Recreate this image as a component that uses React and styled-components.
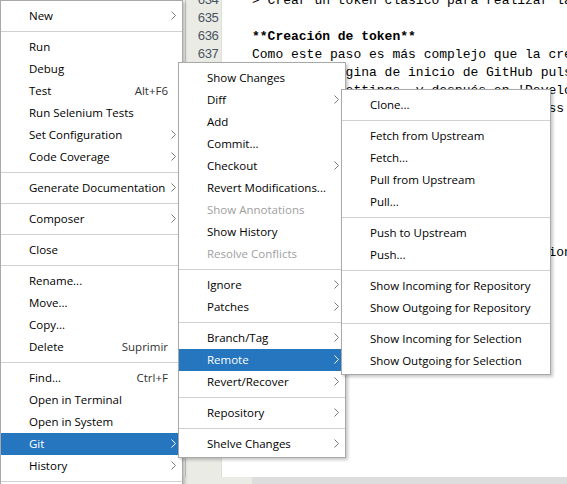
import React from "react";
import styled, { createGlobalStyle } from "styled-components";

const GlobalStyle = createGlobalStyle`
  *, *::before, *::after { box-sizing: border-box; }
  html, body { margin: 0; padding: 0; }
  body {
    background: #ffffff;
    font-family: "Segoe UI", "Open Sans", "Noto Sans", sans-serif;
  }
`;

const Screen = styled.div`
  position: relative;
  width: 567px;
  height: 484px;
  overflow: hidden;
  display: flex;
  flex-direction: column;
  background: #ffffff;
`;

const Workspace = styled.div`
  flex: 1;
  display: flex;
  min-height: 0;
  overflow: hidden;
`;

const ProjectPanel = styled.div`
  width: 186px;
  flex-shrink: 0;
  background: #f2f2f2;
  border-right: 1px solid #c8c8c8;
`;

const Gutter = styled.div`
  width: 36px;
  flex-shrink: 0;
  background: #ebebe6;
  border-right: 1px solid #dededa;
  padding-right: 3px;
  margin-top: -8px;
  font-family: "Liberation Mono", monospace;
  font-size: 13px;
  letter-spacing: -1px;
  line-height: 18px;
  color: #46525e;
  text-align: right;
`;

const Editor = styled.div`
  flex: 1;
  padding-left: 30px;
  margin-top: -8px;
  font-family: "Liberation Mono", "Courier New", monospace;
  font-size: 13px;
  line-height: 18px;
  color: #000000;
  white-space: pre;
  overflow: hidden;
`;

const CodeLine = styled.div`
  height: 18px;
  font-weight: ${(p) => (p.$bold ? 700 : 400)};
`;

const LineNo = styled.div`
  height: 18px;
`;

const BottomBar = styled.div`
  height: 7px;
  display: flex;
`;

const BarLeft = styled.div`
  width: 252px;
  background: #ebebe6;
`;

const BarTrack = styled.div`
  flex: 1;
  background: #dddddd;
`;

const Menu = styled.div`
  position: absolute;
  top: ${(p) => p.$top}px;
  left: ${(p) => p.$left}px;
  width: ${(p) => p.$width}px;
  background: #ffffff;
  border: 1px solid #a9a9a9;
  padding: 4px 0 2px;
  box-shadow: 2px 2px 3px rgba(0, 0, 0, 0.22);
`;

const Item = styled.div`
  height: 22px;
  display: flex;
  align-items: center;
  padding: 0 6px 1px 28px;
  font-size: 11.5px;
  white-space: nowrap;
  color: ${(p) => (p.$active ? "#ffffff" : p.$disabled ? "#a0a0a0" : "#000000")};
  background: ${(p) => (p.$active ? "#2675bf" : "transparent")};
`;

const Label = styled.span`
  flex: 1;
`;

const Shortcut = styled.span`
  margin-right: 8px;
  color: #333333;
`;

const Separator = styled.div`
  height: 9px;
  display: flex;
  align-items: center;
  &::after {
    content: "";
    flex: 1;
    height: 1px;
    background: #d0d0d0;
  }
`;

function Arrow({ active }) {
  return (
    <svg width="5" height="9" viewBox="0 0 5 9">
      <path
        d="M0.5 0.5 L4.5 4.5 L0.5 8.5"
        fill="none"
        stroke={active ? "#ffffff" : "#7a7a7a"}
        strokeWidth="1"
      />
    </svg>
  );
}

const fileMenu = [
  { label: "New", sub: true },
  "-",
  { label: "Run" },
  { label: "Debug" },
  { label: "Test", key: "Alt+F6" },
  { label: "Run Selenium Tests" },
  { label: "Set Configuration", sub: true },
  { label: "Code Coverage", sub: true },
  "-",
  { label: "Generate Documentation", sub: true },
  "-",
  { label: "Composer", sub: true },
  "-",
  { label: "Close" },
  "-",
  { label: "Rename..." },
  { label: "Move..." },
  { label: "Copy..." },
  { label: "Delete", key: "Suprimir" },
  "-",
  { label: "Find...", key: "Ctrl+F" },
  { label: "Open in Terminal" },
  { label: "Open in System" },
  { label: "Git", sub: true, active: true },
  { label: "History", sub: true },
  "-",
  { label: "Tools", sub: true },
];

const gitMenu = [
  { label: "Show Changes" },
  { label: "Diff", sub: true },
  { label: "Add" },
  { label: "Commit..." },
  { label: "Checkout", sub: true },
  { label: "Revert Modifications..." },
  { label: "Show Annotations", disabled: true },
  { label: "Show History" },
  { label: "Resolve Conflicts", disabled: true },
  "-",
  { label: "Ignore", sub: true },
  { label: "Patches", sub: true },
  "-",
  { label: "Branch/Tag", sub: true },
  { label: "Remote", sub: true, active: true },
  { label: "Revert/Recover", sub: true },
  "-",
  { label: "Repository", sub: true },
  "-",
  { label: "Shelve Changes", sub: true },
];

const remoteMenu = [
  { label: "Clone..." },
  "-",
  { label: "Fetch from Upstream" },
  { label: "Fetch..." },
  { label: "Pull from Upstream" },
  { label: "Pull..." },
  "-",
  { label: "Push to Upstream" },
  { label: "Push..." },
  "-",
  { label: "Show Incoming for Repository" },
  { label: "Show Outgoing for Repository" },
  "-",
  { label: "Show Incoming for Selection" },
  { label: "Show Outgoing for Selection" },
];

const code = [
  "> Crear un token clásico para realizar las operaciones desde NetBeans.",
  "",
  "**Creación de token**",
  "Como este paso es más complejo que la creación del repositorio, lo",
  "Visita la página de inicio de GitHub pulsando sobre tu avatar",
  "y entra en Settings, y después en 'Developer settings'.",
  "y a continuación, en el 'Personal access tokens'.",
  "",
  "Pulsamos en 'Tokens (classic)'",
  "y en 'Generate new token'.",
  "",
  "Nos pedirá la contraseña.",
  "",
  "",
  "Completamos 'Note' y el campo 'Expiration'.",
  "",
  "Marcamos 'repo'.",
  "",
  "Copiamos el token.",
  "",
  "",
  "",
  "",
  "",
  "",
  "",
];

function PopupMenu({ items, top, left, width }) {
  return (
    <Menu $top={top} $left={left} $width={width}>
      {items.map((it, i) =>
        it === "-" ? (
          <Separator key={i} />
        ) : (
          <Item key={i} $active={it.active} $disabled={it.disabled}>
            <Label>{it.label}</Label>
            {it.key && <Shortcut>{it.key}</Shortcut>}
            {it.sub && <Arrow active={it.active} />}
          </Item>
        )
      )}
    </Menu>
  );
}

export default function App() {
  return (
    <Screen>
      <GlobalStyle />
      <Workspace>
        <ProjectPanel />
        <Gutter>
          {code.map((_, i) => (
            <LineNo key={i}>{634 + i}</LineNo>
          ))}
        </Gutter>
        <Editor>
          {code.map((line, i) => (
            <CodeLine key={i} $bold={line.startsWith("**")}>
              {line || " "}
            </CodeLine>
          ))}
        </Editor>
      </Workspace>
      <BottomBar>
        <BarLeft />
        <BarTrack />
      </BottomBar>
      <PopupMenu items={fileMenu} top={0} left={0} width={183} />
      <PopupMenu items={gitMenu} top={62} left={178} width={168} />
      <PopupMenu items={remoteMenu} top={89} left={341} width={210} />
    </Screen>
  );
}
